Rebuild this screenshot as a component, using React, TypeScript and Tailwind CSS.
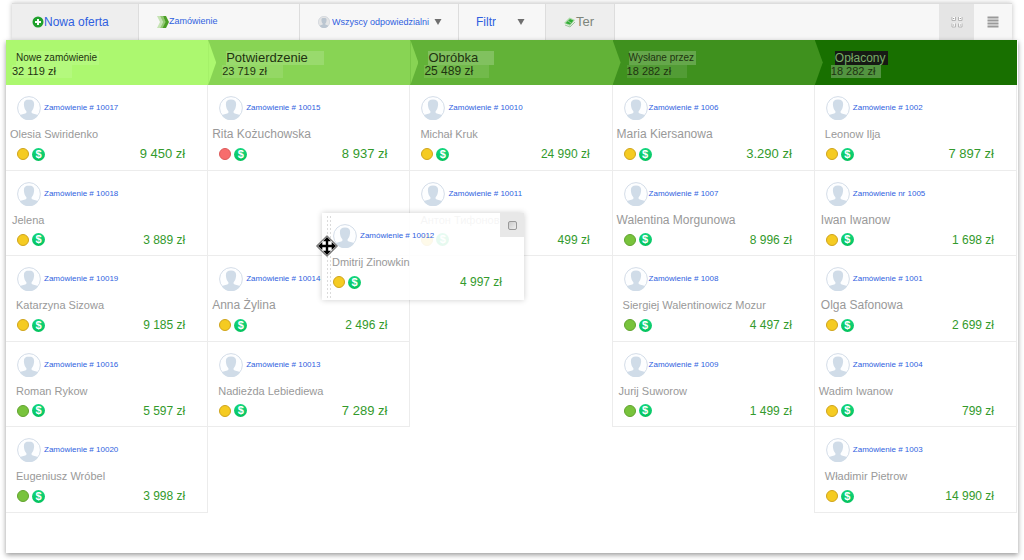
import React from "react";

type Status = "yellow" | "green" | "red";

type Order = {
  no: string;
  name: string;
  price: string;
  status: Status;
  nameClass?: string;
  priceClass?: string;
};

type Column = {
  title: string;
  total: string;
  bg: string;
  arrow: string;
  titleClass: string;
  totalClass: string;
  gap: string;
  orders: (Order | null)[];
};

const columns: Column[] = [
  {
    title: "Nowe zamówienie",
    total: "32 119 zł",
    bg: "bg-[#acf86f]",
    arrow: "",
    titleClass: "ml-[10px] pr-0.5 text-[10px] bg-white/10",
    totalClass: "ml-[6px] pr-4 text-[11px] bg-white/10",
    gap: "gap-[3px]",
    orders: [
      { no: "# 10017", name: "Olesia Swiridenko", price: "9 450 zł", status: "yellow", nameClass: "pl-1 text-[11px]", priceClass: "text-[13px]" },
      { no: "# 10018", name: "Jelena", price: "3 889 zł", status: "yellow", nameClass: "pl-1.5 text-[11px]" },
      { no: "# 10019", name: "Katarzyna Sizowa", price: "9 185 zł", status: "yellow" },
      { no: "# 10016", name: "Roman Rykow", price: "5 597 zł", status: "green" },
      { no: "# 10020", name: "Eugeniusz Wróbel", price: "3 998 zł", status: "green" },
    ],
  },
  {
    title: "Potwierdzenie",
    total: "23 719 zł",
    bg: "bg-[#88d454]",
    arrow: "bg-[#acf86f]",
    titleClass: "ml-[18px] pr-4 text-[13px] bg-white/15",
    totalClass: "ml-[14px] pr-4 text-[11px] bg-white/10",
    gap: "gap-[3px]",
    orders: [
      { no: "# 10015", name: "Rita Kożuchowska", price: "8 937 zł", status: "red", nameClass: "pl-1 text-[12px]", priceClass: "text-[13px]" },
      null,
      { no: "# 10014", name: "Anna Żylina", price: "2 496 zł", status: "yellow", nameClass: "pl-1 text-[12px]" },
      { no: "# 10013", name: "Nadieżda Lebiediewa", price: "7 289 zł", status: "yellow", priceClass: "text-[13px]" },
    ],
  },
  {
    title: "Obróbka",
    total: "25 489 zł",
    bg: "bg-[#62b237]",
    arrow: "bg-[#88d454]",
    titleClass: "ml-[18px] pr-4 text-[13px] bg-white/20",
    totalClass: "ml-[14px] pr-4 text-[12px] bg-white/10",
    gap: "gap-[3px]",
    orders: [
      { no: "# 10010", name: "Michał Kruk", price: "24 990 zł", status: "yellow" },
      { no: "# 10011", name: "Антон Тифонов", price: "499 zł", status: "yellow" },
    ],
  },
  {
    title: "Wysłane przez",
    total: "18 282 zł",
    bg: "bg-[#3f911e]",
    arrow: "bg-[#62b237]",
    titleClass: "ml-[16px] pr-0.5 text-[10px] bg-white/20",
    totalClass: "ml-[14px] pr-4 text-[11px] bg-white/10",
    gap: "gap-px",
    orders: [
      { no: "# 1006", name: "Maria Kiersanowa", price: "3.290 zł", status: "yellow", nameClass: "pl-1 text-[12px]", priceClass: "text-[13px]" },
      { no: "# 1007", name: "Walentina Morgunowa", price: "8 996 zł", status: "green", nameClass: "pl-1 text-[12px]" },
      { no: "# 1008", name: "Siergiej Walentinowicz Mozur", price: "4 497 zł", status: "green" },
      { no: "# 1009", name: "Jurij Suworow", price: "1 499 zł", status: "green", nameClass: "pl-1.5 text-[11px]" },
    ],
  },
  {
    title: "Opłacony",
    total: "18 282 zł",
    bg: "bg-[#187000]",
    arrow: "bg-[#3f911e]",
    titleClass: "ml-[20px] pr-0.5 text-[12px] bg-[#161a14] text-[#79ad68]",
    totalClass: "ml-[16px] pr-1.5 text-[11px] bg-white/25",
    gap: "gap-[3px]",
    orders: [
      { no: "# 1002", name: "Leonow Ilja", price: "7 897 zł", status: "yellow", priceClass: "text-[13px]" },
      { no: "nr 1005", name: "Iwan Iwanow", price: "1 698 zł", status: "yellow", nameClass: "pl-1.5 text-[12px]" },
      { no: "# 1001", name: "Olga Safonowa", price: "2 699 zł", status: "yellow", nameClass: "pl-1.5 text-[12px]" },
      { no: "# 1004", name: "Wadim Iwanow", price: "799 zł", status: "yellow", nameClass: "pl-1 text-[11px]" },
      { no: "# 1003", name: "Władimir Pietrow", price: "14 990 zł", status: "yellow" },
    ],
  },
];

const dragged: Order = { no: "# 10012", name: "Dmitrij Zinowkin", price: "4 997 zł", status: "yellow" };

const dots: Record<Status, string> = {
  yellow: "bg-[#f5cb22] border-[#cfa41c]",
  green: "bg-[#78c33c] border-[#61a32f]",
  red: "bg-[#f76d6d] border-[#dd5a5a]",
};

const Avatar = ({ className }: { className: string }) => (
  <svg viewBox="0 0 24 24" className={className} aria-hidden="true">
    <circle cx="12" cy="12" r="11.4" fill="#fdfeff" stroke="#cfd9e5" strokeWidth="0.9" />
    <path
      d="M12 3.500c-3.800 0-5.300 1.800-5.100 5 .1 3 1.100 5.200 2.500 6.700v1.600c-1 1.200-4.600 1.200-6.600 2.700a11.400 11.400 0 0 0 18.400 0c-2-1.500-5.600-1.500-6.600-2.700v-1.600c1.400-1.500 2.400-3.700 2.500-6.700.2-3.200-1.300-5-5.100-5z"
      fill="#d0dce8"
    />
  </svg>
);

const Caret = () => (
  <svg viewBox="0 0 8 6" className="w-2 h-1.5 shrink-0 pointer-events-none" aria-hidden="true">
    <path d="M0.500 0h7L4 6z" fill="#6f6f6f" />
  </svg>
);

const OrderCard = ({ order, gap }: { order: Order; gap: string }) => (
  <div>
    <div className={`flex items-center pl-[11px] ${gap}`}>
      <Avatar className="w-6 h-6 shrink-0" />
      <a href="#" className="text-[8px] leading-3 text-[#2f5fe0] whitespace-nowrap">
        Zamówienie {order.no}
      </a>
    </div>
    <p className={`mt-1.5 leading-4 text-[#999999] whitespace-nowrap ${order.nameClass || "pl-2.5 text-[11px]"}`}>
      {order.name}
    </p>
    <div className="mt-1 flex items-center pl-[11px] pr-[22px]">
      <span className={`w-3 h-3 rounded-full border ${dots[order.status]}`} />
      <span className="ml-[3px] w-[13px] h-[13px] rounded-full bg-gradient-to-b from-[#14d67f] to-[#04c25c] text-white text-[11px] leading-[13px] font-bold text-center">
        $
      </span>
      <span className={`ml-auto leading-4 text-[#339a2c] ${order.priceClass || "text-[12px]"}`}>{order.price}</span>
    </div>
  </div>
);

const Toolbar = () => (
  <div className="mx-1.5 h-[37px] flex items-stretch bg-[#f7f7f7] border-t border-[#dddddd] shadow-[0_0_5px_rgba(0,0,0,0.25)]">
    <button className="w-[127px] pl-5 flex items-center bg-[#eeeeee] border-r border-[#dddddd] text-[12px] text-[#2f5fe0]">
      <svg viewBox="0 0 12 12" className="w-3 h-3" aria-hidden="true">
        <circle cx="6" cy="6" r="5.500" fill="#1fa02c" />
        <path d="M6 3v6M3 6h6" stroke="#fff" strokeWidth="2" />
      </svg>
      Nowa oferta
    </button>
    <button className="w-[161px] pl-[18px] flex items-center border-r border-[#dddddd] text-[9px] text-[#2f5fe0]">
      <svg viewBox="0 0 12 12" className="w-3 h-3" aria-hidden="true">
        <path d="M0 0h3l3 6-3 6H0l3-6z" fill="#c5e3b3" />
        <path d="M3 0h3l3 6-3 6H3l3-6z" fill="#93c973" />
        <path d="M6 0h3l3 6-3 6H5.500l3-6z" fill="#4c9f26" />
      </svg>
      Zamówienie
    </button>
    <div className="w-[159px] pl-[18px] flex items-center border-r border-[#dddddd]">
      <Avatar className="w-3 h-3 mr-0.5 shrink-0 brightness-90" />
      <select
        aria-label="Odpowiedzialni"
        className="appearance-none bg-transparent mr-1 text-[9px] leading-4 text-[#2f5fe0]"
      >
        <option>Wszyscy odpowiedzialni</option>
      </select>
      <Caret />
    </div>
    <div className="w-[87px] pl-[17px] pr-5 flex items-center justify-between border-r border-[#dddddd]">
      <select aria-label="Filtr" className="appearance-none bg-transparent text-[12px] leading-4 text-[#2f5fe0]">
        <option>Filtr</option>
      </select>
      <Caret />
    </div>
    <button className="w-[69px] pl-[18px] flex items-center bg-[#eeeeee] border-r border-[#dddddd] text-[13px] text-[#7d857b]">
      <svg viewBox="0 0 12 12" className="w-3 h-3" aria-hidden="true">
        <path d="M0 7l5.500-5.500L11 4 6 10z" fill="#a9d9a4" />
        <path d="M1.500 7.200L6 3l3.500 1.500L6 8.500z" fill="#31ad35" />
        <path d="M4 5l3 2M1 9l5 2 5-5" fill="none" stroke="#9cc79a" />
      </svg>
      Ter
    </button>
    <button aria-label="Siatka" className="ml-auto w-[35px] flex items-center justify-center bg-[#e5e5e5]">
      <svg viewBox="0 0 12 12" className="w-3 h-3" fill="#fff" stroke="#b5b5b5" aria-hidden="true">
        <path d="M1 1v3.500h3.500V1M7.500 1v3.500H11V1M1 7.500V11h3.500V7.500M7.500 7.500V11H11V7.500" />
        <path d="M2.200 2.500h1M8.800 2.500h1M2.200 9h1M8.800 9h1" stroke="#888888" />
      </svg>
    </button>
    <button aria-label="Lista" className="w-[38px] flex items-center justify-center">
      <svg viewBox="0 0 12 12" className="w-3 h-3" aria-hidden="true">
        <path d="M0.500 1.500h11M0.500 4.500h11M0.500 7.500h11M0.500 10.500h11" stroke="#9a9a9a" strokeWidth="2" />
      </svg>
    </button>
  </div>
);

const App = () => {
  return (
    <div className="min-h-[560px] bg-white pt-[3px] px-1.5 font-['Liberation_Sans',Arial,sans-serif]">
      <Toolbar />

      <div className="relative pb-10 bg-white shadow-[0_2px_5px_rgba(0,0,0,0.4)]">
        <div className="grid grid-cols-5 mr-px">
          {columns.map((col) => (
            <div key={col.title} className={`relative h-[45px] pt-[11px] text-[#1e3310] ${col.bg}`}>
              {col.arrow && (
                <div className={`absolute left-0 inset-y-0 w-2 [clip-path:polygon(0_0,100%_50%,0_100%)] ${col.arrow}`} />
              )}
              <h2 className={`w-fit leading-[14px] ${col.titleClass}`}>{col.title}</h2>
              <p className={`w-fit leading-[13px] ${col.totalClass}`}>{col.total}</p>
            </div>
          ))}
        </div>

        <div className="grid grid-cols-5 mr-px h-[428px]">
          {columns.map((col, c) => (
            <div key={col.title} className="grid grid-rows-5">
              {col.orders.map((order, i) => (
                <div
                  key={i}
                  className={`pt-[11px] border-b border-r border-[#ececec] ${c > 2 ? "border-l -ml-px" : ""}`}
                >
                  {order && <OrderCard order={order} gap={col.gap} />}
                </div>
              ))}
            </div>
          ))}
        </div>

        {/* card being dragged */}
        <div className="absolute left-[316px] top-[173px] w-[202px] h-[87px] pt-[11px] bg-white/90 shadow-[0_0_6px_rgba(0,0,0,0.2)]">
          <div className="absolute left-1 inset-y-0.5 w-[5px] opacity-70 bg-[radial-gradient(#cccccc_1px,transparent_1px)] bg-[size:3px_4px]" />
          <OrderCard order={dragged} gap="gap-[3px]" />
          <label className="absolute top-0 right-0 w-6 h-6 flex items-center justify-center bg-[#e8e8e8]">
            <input
              type="checkbox"
              aria-label="Zaznacz zamówienie"
              className="appearance-none w-[9px] h-[9px] rounded-xs border border-[#999999] bg-gradient-to-br from-[#cccccc] to-[#eeeeee]"
            />
          </label>
          <svg viewBox="0 0 22 22" className="absolute -left-[6px] top-[22px] w-[22px] h-[22px]" aria-hidden="true">
            <path d="M11 0.800L21.200 11 11 21.200 0.800 11z" fill="#fff" stroke="#777777" strokeWidth="1.200" strokeLinejoin="round" />
            <path d="M11 4v14M4 11h14" stroke="#000" strokeWidth="2.400" />
            <path d="M11 2l4 4.300H7zM11 20l4-4.300H7zM2 11l4.300-4v8zM20 11l-4.300-4v8z" fill="#000" />
          </svg>
        </div>
      </div>
    </div>
  );
};

export default App;
